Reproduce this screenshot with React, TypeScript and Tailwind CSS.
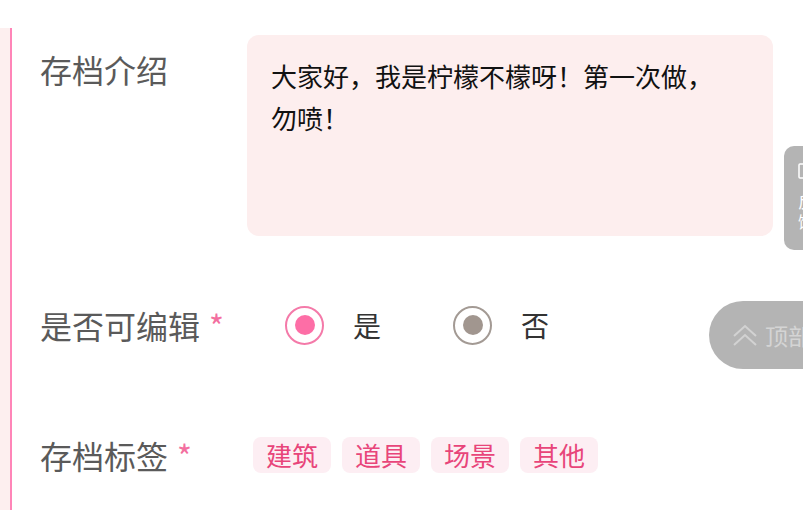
import React from 'react';

const font = { fontFamily: '"Noto Sans CJK SC", "Noto Sans", sans-serif' };

function Radio({ checked, label }: { checked: boolean; label: string }) {
  return (
    <div className="flex items-center">
      <span
        className={`flex h-[39px] w-[39px] items-center justify-center rounded-full border-2 ${
          checked ? 'border-[#f47aa9]' : 'border-[#a39a94]'
        }`}
      >
        <span className={`h-[20px] w-[20px] rounded-full ${checked ? 'bg-[#fd6ea6]' : 'bg-[#a1968f]'}`} />
      </span>
      <span className="ml-[29px] text-[28px] leading-none text-[#333]">{label}</span>
    </div>
  );
}

export default function App() {
  const tags = ['建筑', '道具', '场景', '其他'];

  return (
    <div className="relative h-[510px] w-[803px] overflow-hidden bg-white" style={font}>
      <div className="mt-[28px] flex h-[482px]">
        <div className="w-[10px] bg-[#fdefef]" />
        <div className="w-[2px] bg-[#ff85b8]" />
        <div className="flex-1 pl-[28px]">
          {/* 存档介绍 */}
          <div className="mt-[7px] flex">
            <div className="w-[207px] pt-[12px] text-[32px] leading-[44px] text-[#5a5a5a]">存档介绍</div>
            <div className="h-[201px] w-[526px] rounded-[12px] bg-[#fdeeee] pl-[24px] pr-[40px] pt-[20px] text-[26px] leading-[42px] text-[#111]">
              大家好，我是柠檬不檬呀！第一次做，勿喷！
            </div>
          </div>

          {/* 是否可编辑 */}
          <div className="mt-[59px] flex h-[60px] items-center">
            <div className="flex w-[245px] items-center text-[32px] text-[#5a5a5a]">
              是否可编辑<span className="ml-[9px] text-[#f36fa0]">*</span>
            </div>
            <Radio checked label="是" />
            <div className="ml-[72px]">
              <Radio checked={false} label="否" />
            </div>
          </div>

          {/* 存档标签 */}
          <div className="mt-[70px] flex h-[60px] items-center">
            <div className="flex w-[213px] items-center text-[32px] text-[#5a5a5a]">
              存档标签<span className="ml-[9px] text-[#f36fa0]">*</span>
            </div>
            <div className="flex gap-[11px]">
              {tags.map((t) => (
                <span
                  key={t}
                  className="flex h-[36px] w-[78px] items-center justify-center rounded-[8px] bg-[#fdeef3] text-[26px] leading-none text-[#e8457a]"
                >
                  {t}
                </span>
              ))}
            </div>
          </div>
        </div>
      </div>

      {/* floating feedback */}
      <div className="absolute left-[784px] top-[146px] flex h-[104px] w-[44px] flex-col rounded-l-[10px] bg-[#b4b4b4] pl-[14px] pt-[17px] text-[16px] leading-[20px] text-white">
        <svg width="20" height="16" viewBox="0 0 20 16" fill="none" stroke="white" strokeWidth="1.5">
          <rect x="1" y="1" width="18" height="14" rx="1" />
        </svg>
        <span className="mt-[12px]">反</span>
        <span>馈</span>
      </div>

      {/* back to top */}
      <div className="absolute left-[709px] top-[301px] flex h-[68px] w-[130px] items-center rounded-full bg-[#b4b4b4] pl-[24px]">
        <svg width="24" height="22" viewBox="0 0 24 22" fill="none" stroke="#d2d2d2" strokeWidth="2">
          <path d="M1 12 L12 2 L23 12" />
          <path d="M1 21 L12 11 L23 21" />
        </svg>
        <span className="ml-[8px] text-[23px] text-[#d4d4d4]">顶部</span>
      </div>
    </div>
  );
}
